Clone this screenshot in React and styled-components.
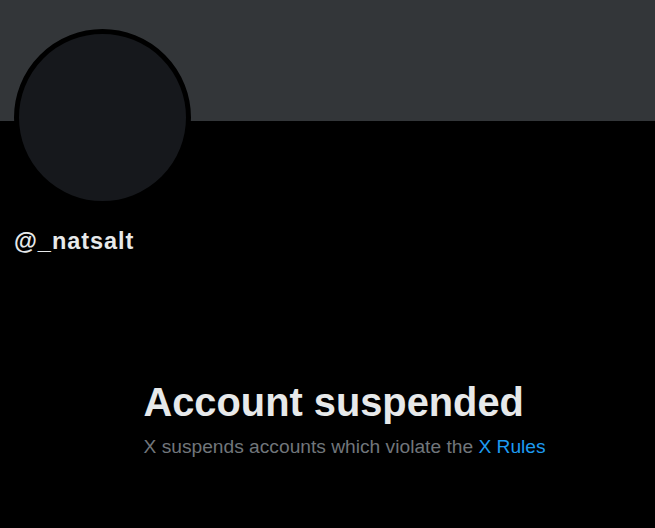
import React from "react";
import styled, { createGlobalStyle } from "styled-components";

const GlobalStyle = createGlobalStyle`
  html, body {
    margin: 0;
    padding: 0;
    background: #000000;
  }
  body {
    font-family: "Liberation Sans", Arial, sans-serif;
    color: #e7e9ea;
    min-height: 528px;
  }
`;

const Page = styled.main`
  display: flex;
  flex-direction: column;
  width: 100%;
  min-height: 528px;
  background: #000000;
`;

const Banner = styled.div`
  height: 121px;
  background: #333639;
`;

const Profile = styled.section`
  display: flex;
  flex-direction: column;
  align-items: flex-start;
  padding: 0 14px;
`;

const Avatar = styled.div`
  width: 167px;
  height: 167px;
  margin-top: -92px;
  border: 5px solid #000000;
  border-radius: 50%;
  background: #16181c;
`;

const Handle = styled.h2`
  margin: 22px 0 0;
  font-size: 23.5px;
  line-height: 26px;
  font-weight: 700;
  letter-spacing: 0.95px;
  color: #e7e9ea;
`;

const EmptyState = styled.section`
  display: flex;
  flex-direction: column;
  width: 400px;
  box-sizing: border-box;
  margin: 124px auto 0;
  padding: 0 16px;
  white-space: nowrap;
`;

const Title = styled.h1`
  margin: 0;
  font-size: 39.8px;
  line-height: 48px;
  font-weight: 700;
  color: #e7e9ea;
`;

const Subtitle = styled.p`
  margin: 9px 0 0;
  font-size: 19.2px;
  line-height: 24px;
  color: #71767b;
`;

const Link = styled.a`
  color: #1d9bf0;
  text-decoration: none;
`;

export default function App() {
  return (
    <Page>
      <GlobalStyle />
      <Banner />
      <Profile>
        <Avatar />
        <Handle>@_natsalt</Handle>
      </Profile>
      <EmptyState>
        <Title>Account suspended</Title>
        <Subtitle>
          X suspends accounts which violate the <Link href="#">X Rules</Link>
        </Subtitle>
      </EmptyState>
    </Page>
  );
}
